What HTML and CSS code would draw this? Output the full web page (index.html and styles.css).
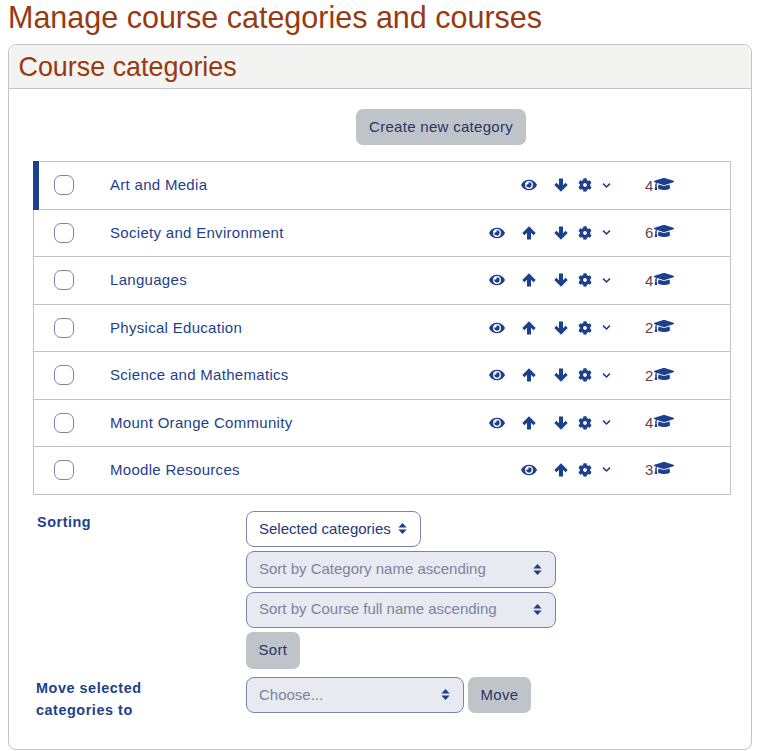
FILE: index.html
```html
<!DOCTYPE html>
<html lang="en-US">

<head>
    <meta charset="UTF-8">
    <meta name="viewport" content="width=device-width, initial-scale=1.0">
    <title>Manage course categories and courses</title>
    <link rel="stylesheet" href="styles.css">
</head>

<body>
    <svg class="icon-defs" aria-hidden="true">
        <symbol id="i-eye" viewBox="0 0 576 512"><path d="M572.52 241.4C518.29 135.59 410.93 64 288 64S57.68 135.64 3.48 241.41a32.35 32.35 0 0 0 0 29.19C57.71 376.41 165.07 448 288 448s230.32-71.64 284.52-177.41a32.35 32.35 0 0 0 0-29.19zM288 400a144 144 0 1 1 144-144 143.93 143.93 0 0 1-144 144zm0-240a95.31 95.31 0 0 0-25.31 3.79 47.85 47.85 0 0 1-66.9 66.9A95.78 95.78 0 1 0 288 160z"/></symbol>
        <symbol id="i-up" viewBox="0 0 14 14"><path d="M7 .3 13.7 7 11.5 9.2 9 6.8V13.6H5V6.8L2.5 9.2.3 7Z"/></symbol>
        <symbol id="i-down" viewBox="0 0 14 14"><path d="M7 13.7 13.7 7 11.5 4.8 9 7.2V.4H5V7.2L2.5 4.8.3 7Z"/></symbol>
        <symbol id="i-cog" viewBox="0 0 512 512"><path fill-rule="evenodd" d="M487.4 315.7l-42.6-24.6c4.3-23.2 4.3-47 0-70.2l42.6-24.6c4.9-2.8 7.1-8.6 5.5-14-11.1-35.6-30-67.8-54.7-94.6-3.8-4.1-10-5.1-14.8-2.3L380.8 110c-17.9-15.4-38.5-27.3-60.8-35.1V25.8c0-5.6-3.9-10.5-9.4-11.7-36.7-8.2-74.3-7.8-109.2 0-5.5 1.2-9.4 6.1-9.4 11.7V75c-22.2 7.9-42.8 19.8-60.8 35.1L88.7 85.5c-4.9-2.8-11-1.9-14.8 2.3-24.7 26.7-43.6 58.9-54.7 94.6-1.7 5.4.6 11.2 5.5 14L67.3 221c-4.3 23.2-4.3 47 0 70.2l-42.6 24.6c-4.9 2.8-7.1 8.6-5.5 14 11.1 35.6 30 67.8 54.7 94.6 3.8 4.1 10 5.1 14.8 2.3l42.6-24.6c17.9 15.4 38.5 27.3 60.8 35.1v49.2c0 5.6 3.9 10.5 9.4 11.7 36.7 8.2 74.3 7.8 109.2 0 5.5-1.2 9.4-6.1 9.4-11.7v-49.2c22.2-7.9 42.8-19.8 60.8-35.1l42.6 24.6c4.9 2.8 11 1.9 14.8-2.3 24.7-26.7 43.6-58.9 54.7-94.6 1.5-5.5-.7-11.3-5.6-14.1zM256 326c-38.7 0-70-31.3-70-70s31.3-70 70-70 70 31.3 70 70-31.3 70-70 70z"/></symbol>
        <symbol id="i-chev" viewBox="0 0 10 7"><path d="M1.2 1.4 5 5.2l3.8-3.8" fill="none" stroke="currentColor" stroke-width="1.7"/></symbol>
        <symbol id="i-cap" viewBox="0 0 640 512"><path d="M622.34 153.2L343.4 67.5c-15.2-4.67-31.6-4.67-46.79 0L17.66 153.2c-23.54 7.23-23.54 38.36 0 45.59l48.63 14.94c-10.67 13.19-17.23 29.28-17.88 46.9C38.78 266.15 32 276.11 32 288c0 10.78 5.68 19.85 13.86 25.65L20.33 428.53C18.11 438.52 25.71 448 35.94 448h56.11c10.24 0 17.84-9.48 15.62-19.47L82.14 313.65C90.32 307.85 96 298.78 96 288c0-11.57-6.47-21.25-15.66-26.87.76-15.02 8.44-28.3 20.69-36.72L296.6 284.5c9.06 2.78 26.44 6.25 46.79 0l278.95-85.7c23.55-7.24 23.55-38.36 0-45.6zM352.79 315.09c-28.53 8.76-52.84 3.92-65.59 0l-145.02-44.55L128 384c0 35.35 85.96 64 192 64s192-28.65 192-64l-14.18-113.47-145.03 44.56z"/></symbol>
        <symbol id="i-caret" viewBox="0 0 10 12"><path d="M5 0 9.6 5H.4zM5 12 .4 7h9.2z"/></symbol>
    </svg>

    <h1 class="page-title">Manage course categories and courses</h1>

    <div class="card">
        <h2 class="card-title">Course categories</h2>
        <div class="card-body">
            <div class="create-row">
                <button class="btn">Create new category</button>
            </div>

            <ul class="cat-list">
                <li class="cat-row current">
                    <span class="check"></span>
                    <a class="cat-name">Art and Media</a>
                    <span class="actions">
                        <svg class="ic eye"><use href="#i-eye"/></svg>
                        <svg class="ic arrow"><use href="#i-down"/></svg>
                        <svg class="ic cog"><use href="#i-cog"/></svg>
                        <svg class="ic chev"><use href="#i-chev"/></svg>
                    </span>
                    <span class="count">4<svg class="ic cap"><use href="#i-cap"/></svg></span>
                </li>
                <li class="cat-row">
                    <span class="check"></span>
                    <a class="cat-name">Society and Environment</a>
                    <span class="actions">
                        <svg class="ic eye"><use href="#i-eye"/></svg>
                        <svg class="ic arrow"><use href="#i-up"/></svg>
                        <svg class="ic arrow"><use href="#i-down"/></svg>
                        <svg class="ic cog"><use href="#i-cog"/></svg>
                        <svg class="ic chev"><use href="#i-chev"/></svg>
                    </span>
                    <span class="count">6<svg class="ic cap"><use href="#i-cap"/></svg></span>
                </li>
                <li class="cat-row">
                    <span class="check"></span>
                    <a class="cat-name">Languages</a>
                    <span class="actions">
                        <svg class="ic eye"><use href="#i-eye"/></svg>
                        <svg class="ic arrow"><use href="#i-up"/></svg>
                        <svg class="ic arrow"><use href="#i-down"/></svg>
                        <svg class="ic cog"><use href="#i-cog"/></svg>
                        <svg class="ic chev"><use href="#i-chev"/></svg>
                    </span>
                    <span class="count">4<svg class="ic cap"><use href="#i-cap"/></svg></span>
                </li>
                <li class="cat-row">
                    <span class="check"></span>
                    <a class="cat-name">Physical Education</a>
                    <span class="actions">
                        <svg class="ic eye"><use href="#i-eye"/></svg>
                        <svg class="ic arrow"><use href="#i-up"/></svg>
                        <svg class="ic arrow"><use href="#i-down"/></svg>
                        <svg class="ic cog"><use href="#i-cog"/></svg>
                        <svg class="ic chev"><use href="#i-chev"/></svg>
                    </span>
                    <span class="count">2<svg class="ic cap"><use href="#i-cap"/></svg></span>
                </li>
                <li class="cat-row">
                    <span class="check"></span>
                    <a class="cat-name">Science and Mathematics</a>
                    <span class="actions">
                        <svg class="ic eye"><use href="#i-eye"/></svg>
                        <svg class="ic arrow"><use href="#i-up"/></svg>
                        <svg class="ic arrow"><use href="#i-down"/></svg>
                        <svg class="ic cog"><use href="#i-cog"/></svg>
                        <svg class="ic chev"><use href="#i-chev"/></svg>
                    </span>
                    <span class="count">2<svg class="ic cap"><use href="#i-cap"/></svg></span>
                </li>
                <li class="cat-row">
                    <span class="check"></span>
                    <a class="cat-name">Mount Orange Community</a>
                    <span class="actions">
                        <svg class="ic eye"><use href="#i-eye"/></svg>
                        <svg class="ic arrow"><use href="#i-up"/></svg>
                        <svg class="ic arrow"><use href="#i-down"/></svg>
                        <svg class="ic cog"><use href="#i-cog"/></svg>
                        <svg class="ic chev"><use href="#i-chev"/></svg>
                    </span>
                    <span class="count">4<svg class="ic cap"><use href="#i-cap"/></svg></span>
                </li>
                <li class="cat-row">
                    <span class="check"></span>
                    <a class="cat-name">Moodle Resources</a>
                    <span class="actions">
                        <svg class="ic eye"><use href="#i-eye"/></svg>
                        <svg class="ic arrow"><use href="#i-up"/></svg>
                        <svg class="ic cog"><use href="#i-cog"/></svg>
                        <svg class="ic chev"><use href="#i-chev"/></svg>
                    </span>
                    <span class="count">3<svg class="ic cap"><use href="#i-cap"/></svg></span>
                </li>
            </ul>

            <div class="bulk-row sorting">
                <div class="bulk-label">Sorting</div>
                <div class="bulk-fields">
                    <div class="select">Selected categories<svg class="ic caret"><use href="#i-caret"/></svg></div>
                    <div class="select disabled wide">Sort by Category name ascending<svg class="ic caret"><use href="#i-caret"/></svg></div>
                    <div class="select disabled wide">Sort by Course full name ascending<svg class="ic caret"><use href="#i-caret"/></svg></div>
                    <button class="btn">Sort</button>
                </div>
            </div>

            <div class="bulk-row moving">
                <div class="bulk-label">Move selected<br>categories to</div>
                <div class="bulk-inline">
                    <div class="select disabled choose">Choose...<svg class="ic caret"><use href="#i-caret"/></svg></div>
                    <button class="btn">Move</button>
                </div>
            </div>
        </div>
    </div>
</body>

</html>
```

FILE: styles.css
```css
body {
    font-family: "Liberation Sans", Arial, sans-serif;
    background-color: #fff;
    color: #1d3f8c;
    margin: 0;
    padding: 0 7px 0 8px;
    box-sizing: border-box;
    font-size: 15px;
}

.icon-defs {
    display: none;
}

.page-title {
    font-size: 30.5px;
    font-weight: 400;
    line-height: 34px;
    color: #98390f;
    margin: 0;
    padding-bottom: 10px;
}

.card {
    border: 1px solid #c0c4c9;
    border-radius: 8px;
    height: 706px;
    box-sizing: border-box;
    overflow: hidden;
}

.card-title {
    font-size: 26.9px;
    font-weight: 400;
    line-height: 41px;
    color: #98390f;
    margin: 0;
    padding: 2px 0 0 9.5px;
    background-color: #f3f3f1;
    border-bottom: 1px solid #c0c4c9;
}

.card-body {
    padding: 20px 20px 0 24px;
}

.create-row {
    padding-left: 323px;
    margin-bottom: 16px;
}

.btn {
    font-family: inherit;
    font-size: 15px;
    letter-spacing: 0.3px;
    color: #2a3566;
    background-color: #bfc4c9;
    border: none;
    border-radius: 7px;
    padding: 0 12.5px;
    height: 36.4px;
}

.create-row .btn {
    padding: 0 13px 2px;
    height: 36px;
}

.bulk-fields .btn {
    padding-bottom: 2px;
}

.bulk-inline .btn {
    height: 36px;
}

.cat-list {
    list-style: none;
    margin: 0;
    padding: 0;
    border: 1px solid #c0c4c9;
}

.cat-row {
    display: flex;
    align-items: center;
    height: 47.5px;
    box-sizing: border-box;
    padding-left: 20px;
    border-bottom: 1px solid #c0c4c9;
    position: relative;
}

.cat-row:last-child {
    border-bottom: none;
    height: 47px;
    padding-bottom: 2px;
}

.cat-row.current::before {
    content: "";
    position: absolute;
    left: -1px;
    top: -1px;
    bottom: -1px;
    width: 6px;
    background-color: #1d3f8c;
}

.check {
    width: 20px;
    height: 20px;
    box-sizing: border-box;
    border: 1px solid #7c83a8;
    border-radius: 7px;
    margin-right: 36px;
    flex-shrink: 0;
}

.cat-name {
    flex: 1;
    line-height: 18px;
    letter-spacing: 0.3px;
}

.actions {
    display: flex;
    align-items: center;
}

.ic {
    fill: #1d3f8c;
    color: #1d3f8c;
    flex-shrink: 0;
}

.ic.eye {
    width: 16px;
    height: 14px;
    margin-right: 17px;
}

.ic.arrow {
    width: 14px;
    height: 14px;
    margin-right: 18px;
}

.actions .ic.arrow:nth-last-child(3) {
    margin-right: 10px;
}

.ic.cog {
    width: 14px;
    height: 14px;
    margin-right: 10px;
}

.ic.chev {
    width: 9px;
    height: 7px;
}

.count {
    display: flex;
    align-items: center;
    width: 85px;
    margin-left: 34px;
    color: #6a3d4a;
    flex-shrink: 0;
}

.ic.cap {
    width: 20px;
    height: 16px;
    margin-top: -3px;
    margin-left: 1px;
}

.bulk-row {
    display: flex;
}

.sorting {
    padding-top: 16px;
}

.moving {
    padding-top: 8px;
}

.bulk-label {
    width: 209px;
    padding-left: 4px;
    font-weight: 700;
    font-size: 14.4px;
    line-height: 22px;
    letter-spacing: 0.55px;
}

.moving .bulk-label {
    padding-left: 3px;
    padding-right: 1px;
}

.bulk-fields {
    display: flex;
    flex-direction: column;
    align-items: flex-start;
    gap: 4px;
}

.bulk-inline {
    display: flex;
    gap: 4px;
}

.select {
    display: flex;
    align-items: center;
    justify-content: space-between;
    gap: 7px;
    height: 36.4px;
    box-sizing: border-box;
    padding: 0 13px 1px 12px;
    border: 1px solid #7c83a8;
    border-radius: 8px;
    line-height: 18px;
    color: #1f3a78;
    background-color: #fff;
}

.select.disabled {
    color: #7c83a0;
    background-color: #e7eaf0;
}

.select.wide {
    width: 310px;
}

.select.choose {
    width: 218px;
    height: 36px;
    padding-bottom: 0;
}

.ic.caret {
    width: 9px;
    height: 11px;
}
```
